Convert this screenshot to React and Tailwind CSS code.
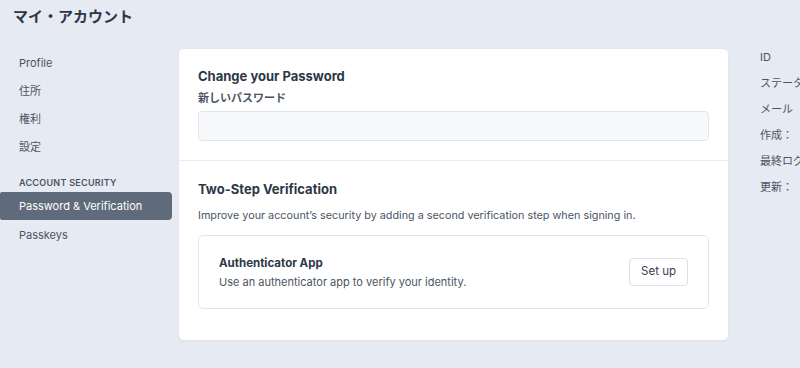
import React from "react";

const FONT = { fontFamily: "Inter, 'Noto Sans CJK JP', sans-serif" };

export default function App() {
  const nav = ["Profile", "住所", "権利", "設定"];
  const meta = ["ID", "ステータス", "メール", "作成：", "最終ログイン", "更新："];

  return (
    <div className="w-[800px] h-[368px] overflow-hidden bg-[#e5eaf3] text-[#374151]" style={FONT}>
      <h1 className="px-[13px] pt-[6px] h-[44px] text-[15px] font-bold text-[#2d3748] leading-[22px]">マイ・アカウント</h1>

      <div className="flex">
        {/* sidebar */}
        <aside className="w-[172px] shrink-0 pt-[5px]">
          <ul className="text-[11px] text-[#4b5563]">
            {nav.map((n) => (
              <li key={n} className="h-[28px] px-[19px] flex items-center">{n}</li>
            ))}
          </ul>
          <div className="mt-[15px] px-[19px] text-[9px] font-semibold tracking-[0.03em] text-[#4b5563] h-[14px] leading-[14px]">
            ACCOUNT SECURITY
          </div>
          <div className="mt-[2px] h-[28px] rounded-r-[4px] rounded-l-[2px] bg-[#5f6b7a] text-white text-[11px] px-[19px] flex items-center whitespace-nowrap">
            Password &amp; Verification
          </div>
          <div className="h-[30px] px-[19px] flex items-center text-[11px] text-[#4b5563]">Passkeys</div>
        </aside>

        {/* card */}
        <main className="ml-[6px] mt-[4px] w-[551px] h-[293px] shrink-0 bg-white rounded-[6px] border border-[#e3e7ee] shadow-[0_1px_2px_rgba(0,0,0,0.04)]">
          <section className="px-[19px] pt-[18px] pb-[19px] border-b border-[#e8ebf0]">
            <h2 className="text-[13px] font-bold text-[#2d3748] leading-[18px]">Change your Password</h2>
            <label className="block mt-[5px] text-[11px] font-semibold text-[#4b5563] leading-[16px]">新しいパスワード</label>
            <input
              type="password"
              className="mt-[5px] w-full h-[30px] rounded-[4px] border border-[#e2e6ec] bg-[#f8f9fb] outline-none"
            />
          </section>

          <section className="px-[19px] pt-[19px]">
            <h2 className="text-[13px] font-bold text-[#2d3748] leading-[18px]">Two-Step Verification</h2>
            <p className="mt-[10px] text-[10.8px] text-[#4b5563] leading-[16px]">
              Improve your account’s security by adding a second verification step when signing in.
            </p>
            <div className="mt-[11px] h-[74px] rounded-[5px] border border-[#e2e6ec] flex items-center justify-between pl-[20px] pr-[20px]">
              <div>
                <div className="text-[11.5px] font-bold text-[#2d3748] leading-[16px]">Authenticator App</div>
                <div className="mt-[3px] text-[11px] text-[#4b5563] leading-[16px]">Use an authenticator app to verify your identity.</div>
              </div>
              <button className="h-[28px] px-[11px] rounded-[4px] border border-[#dde2e9] bg-white text-[11.5px] text-[#374151]">
                Set up
              </button>
            </div>
          </section>
        </main>

        {/* meta */}
        <aside className="ml-[31px] pt-[4px] whitespace-nowrap">
          {meta.map((m) => (
            <div key={m} className="h-[26px] leading-[18px] text-[11px] text-[#4b5563]">{m}</div>
          ))}
        </aside>
      </div>
    </div>
  );
}
